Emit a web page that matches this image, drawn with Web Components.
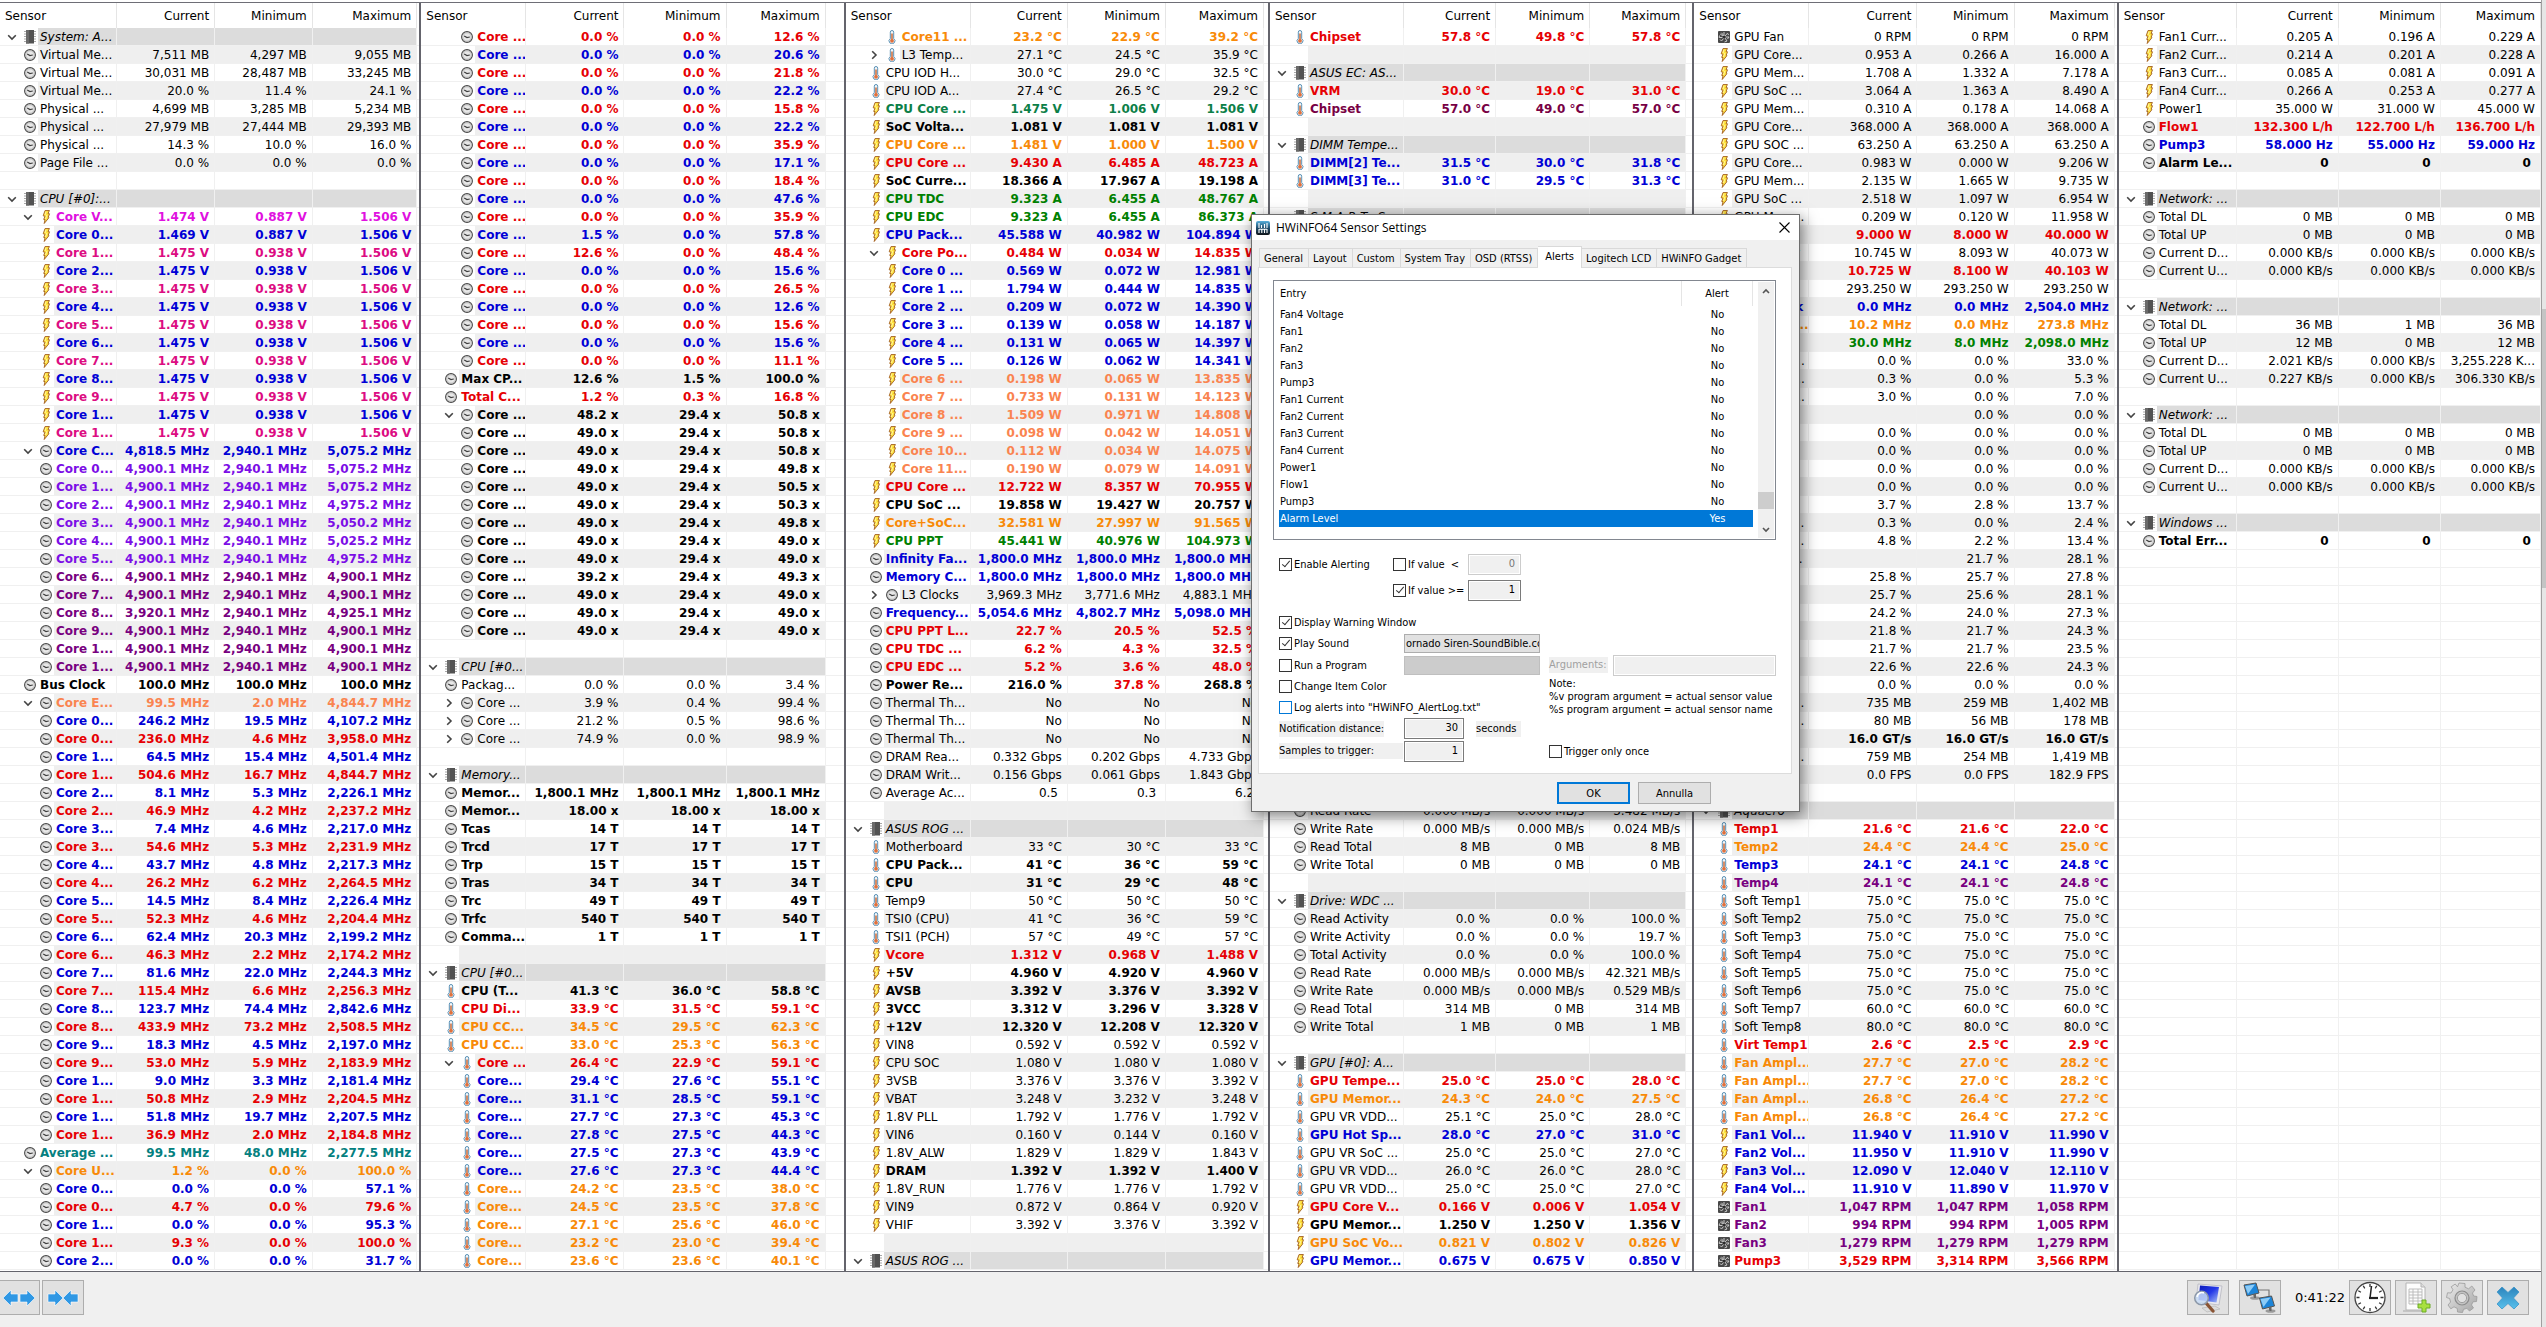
<!DOCTYPE html>
<html lang="en">
<head>
<meta charset="utf-8">
<title>Sensor Status</title>
<style>
html, body { margin: 0; height: 100%; }
body { background: #e4e4e4; font-family: "DejaVu Sans", Verdana, sans-serif; font-size: 12px; color: #000; overflow: hidden; }
</style>
</head>
<body>
<sensor-monitor></sensor-monitor>

<script>
/* Row format: <icon><level><chevron>-<colour>|name|current|minimum|maximum
   icons: c clock, b bolt, t thermometer, f fan; "g|name" is a group, "." an empty row */

/* Rows of one kind that differ only in their values. */
const series = (code, unit, names, values) => values.trim().split(/\s*;\s*/).map((set, i) => {
  const [a, b, c] = set.split(" ");
  const kind = Array.isArray(code) ? code[i % code.length] : code;
  const name = Array.isArray(names) ? names[i] : names;
  return `${kind}|${name}|${a} ${unit}|${b} ${unit}|${c} ${unit}`;
}).join("\n");

const CORES = ["0", "1", "2", "3", "4", "5", "6", "7", "8", "9", "1", "1"].map(n => `Core ${n}...`);
const THREADS = CORES.flatMap(n => [n, n]);

const PANELS = [
{ grow: 421, cols: [117, 99, 98, 105, 2], rows: `
g|System: A...
c1|Virtual Me...|7,511 MB|4,297 MB|9,055 MB
c1|Virtual Me...|30,031 MB|28,487 MB|33,245 MB
c1|Virtual Me...|20.0 %|11.4 %|24.1 %
c1|Physical ...|4,699 MB|3,285 MB|5,234 MB
c1|Physical ...|27,979 MB|27,444 MB|29,393 MB
c1|Physical ...|14.3 %|10.0 %|16.0 %
c1|Page File ...|0.0 %|0.0 %|0.0 %
.
g|CPU [#0]:...
b2v-m|Core V...|1.474 V|0.887 V|1.506 V
b2-b|Core 0...|1.469 V|0.887 V|1.506 V
${series(["b2-p", "b2-b"], "V", CORES.slice(1), Array(11).fill("1.475 0.938 1.506").join(";"))}
c2v-b|Core C...|4,818.5 MHz|2,940.1 MHz|5,075.2 MHz
${series("c2-v", "MHz", CORES, "4,900.1 2,940.1 5,075.2;4,900.1 2,940.1 5,075.2;4,900.1 2,940.1 4,975.2;4,900.1 2,940.1 5,050.2;4,900.1 2,940.1 5,025.2;4,900.1 2,940.1 4,975.2")}
${series("c2-u", "MHz", CORES.slice(6), "4,900.1 2,940.1 4,900.1;4,900.1 2,940.1 4,900.1;3,920.1 2,940.1 4,925.1;4,900.1 2,940.1 4,900.1;4,900.1 2,940.1 4,900.1;4,900.1 2,940.1 4,900.1")}
c1-k|Bus Clock|100.0 MHz|100.0 MHz|100.0 MHz
c2v-c|Core E...|99.5 MHz|2.0 MHz|4,844.7 MHz
${series(["c2-b", "c2-r"], "MHz", THREADS, `246.2 19.5 4,107.2;236.0 4.6 3,958.0;64.5 15.4 4,501.4;504.6 16.7 4,844.7;
8.1 5.3 2,226.1;46.9 4.2 2,237.2;7.4 4.6 2,217.0;54.6 5.3 2,231.9;43.7 4.8 2,217.3;26.2 6.2 2,264.5;
14.5 8.4 2,226.4;52.3 4.6 2,204.4;62.4 20.3 2,199.2;46.3 2.2 2,174.2;81.6 22.0 2,244.3;115.4 6.6 2,256.3;
123.7 74.4 2,842.6;433.9 73.2 2,508.5;18.3 4.5 2,197.0;53.0 5.9 2,183.9;9.0 3.3 2,181.4;50.8 2.9 2,204.5;
51.8 19.7 2,207.5;36.9 2.0 2,184.8`)}
c1-t|Average ...|99.5 MHz|48.0 MHz|2,277.5 MHz
c2v-o|Core U...|1.2 %|0.0 %|100.0 %
${series(["c2-b", "c2-r"], "%", THREADS, "0.0 0.0 57.1;4.7 0.0 79.6;0.0 0.0 95.3;9.3 0.0 100.0;0.0 0.0 31.7")}` },
{ grow: 424, cols: [105, 98, 102, 99, 18], rows: `
${series(["c2-r", "c2-b"], "%", "Core ...", `0.0 0.0 12.6;0.0 0.0 20.6;0.0 0.0 21.8;0.0 0.0 22.2;0.0 0.0 15.8;0.0 0.0 22.2;
0.0 0.0 35.9;0.0 0.0 17.1;0.0 0.0 18.4;0.0 0.0 47.6;0.0 0.0 35.9;1.5 0.0 57.8;12.6 0.0 48.4;0.0 0.0 15.6;
0.0 0.0 26.5;0.0 0.0 12.6;0.0 0.0 15.6;0.0 0.0 15.6;0.0 0.0 11.1`)}
c1-k|Max CP...|12.6 %|1.5 %|100.0 %
c1-r|Total C...|1.2 %|0.3 %|16.8 %
c2v-k|Core ...|48.2 x|29.4 x|50.8 x
${series("c2-k", "x", "Core ...", `49.0 29.4 50.8;49.0 29.4 50.8;49.0 29.4 49.8;49.0 29.4 50.5;49.0 29.4 50.3;49.0 29.4 49.8;
49.0 29.4 49.0;49.0 29.4 49.0;39.2 29.4 49.3;49.0 29.4 49.0;49.0 29.4 49.0;49.0 29.4 49.0`)}
.
g|CPU [#0...
c1|Packag...|0.0 %|0.0 %|3.4 %
c2h|Core ...|3.9 %|0.4 %|99.4 %
c2h|Core ...|21.2 %|0.5 %|98.6 %
c2h|Core ...|74.9 %|0.0 %|98.9 %
.
g|Memory...
c1-k|Memor...|1,800.1 MHz|1,800.1 MHz|1,800.1 MHz
c1-k|Memor...|18.00 x|18.00 x|18.00 x
c1-k|Tcas|14 T|14 T|14 T
c1-k|Trcd|17 T|17 T|17 T
c1-k|Trp|15 T|15 T|15 T
c1-k|Tras|34 T|34 T|34 T
c1-k|Trc|49 T|49 T|49 T
c1-k|Trfc|540 T|540 T|540 T
c1-k|Comma...|1 T|1 T|1 T
.
g|CPU [#0...
t1-k|CPU (T...|41.3 °C|36.0 °C|58.8 °C
t1-r|CPU Di...|33.9 °C|31.5 °C|59.1 °C
t1-o|CPU CC...|34.5 °C|29.5 °C|62.3 °C
t1-o|CPU CC...|33.0 °C|25.3 °C|56.3 °C
t2v-r|Core ...|26.4 °C|22.9 °C|59.1 °C
${series("t2-b", "°C", "Core...", "29.4 27.6 55.1;31.1 28.5 59.1;27.7 27.3 45.3;27.8 27.5 44.3;27.5 27.3 43.9;27.6 27.3 44.4")}
${series("t2-o", "°C", "Core...", "24.2 23.5 38.0;24.5 23.5 37.8;27.1 25.6 46.0;23.2 23.0 39.4;23.6 23.6 40.1")}` },
{ grow: 424, cols: [125, 97, 98, 98, 4], rows: `
t2-o|Core11 ...|23.2 °C|22.9 °C|39.2 °C
t2h|L3 Temp...|27.1 °C|24.5 °C|35.9 °C
t1|CPU IOD H...|30.0 °C|29.0 °C|32.5 °C
t1|CPU IOD A...|27.4 °C|26.5 °C|29.2 °C
b1-s|CPU Core ...|1.475 V|1.006 V|1.506 V
b1-k|SoC Volta...|1.081 V|1.081 V|1.081 V
b1-o|CPU Core ...|1.481 V|1.000 V|1.500 V
b1-r|CPU Core ...|9.430 A|6.485 A|48.723 A
b1-k|SoC Curre...|18.366 A|17.967 A|19.198 A
b1-g|CPU TDC|9.323 A|6.455 A|48.767 A
b1-g|CPU EDC|9.323 A|6.455 A|86.373 A
b1-b|CPU Pack...|45.588 W|40.982 W|104.894 W
b2v-r|Core Po...|0.484 W|0.034 W|14.835 W
b2-b|Core 0 ...|0.569 W|0.072 W|12.981 W
b2-b|Core 1 ...|1.794 W|0.444 W|14.835 W
b2-b|Core 2 ...|0.209 W|0.072 W|14.390 W
b2-b|Core 3 ...|0.139 W|0.058 W|14.187 W
b2-b|Core 4 ...|0.131 W|0.065 W|14.397 W
b2-b|Core 5 ...|0.126 W|0.062 W|14.341 W
b2-c|Core 6 ...|0.198 W|0.065 W|13.835 W
b2-c|Core 7 ...|0.733 W|0.131 W|14.123 W
b2-c|Core 8 ...|1.509 W|0.971 W|14.808 W
b2-c|Core 9 ...|0.098 W|0.042 W|14.051 W
b2-c|Core 10...|0.112 W|0.034 W|14.075 W
b2-c|Core 11...|0.190 W|0.079 W|14.091 W
b1-r|CPU Core ...|12.722 W|8.357 W|70.955 W
b1-k|CPU SoC ...|19.858 W|19.427 W|20.757 W
b1-o|Core+SoC...|32.581 W|27.997 W|91.565 W
b1-g|CPU PPT|45.441 W|40.976 W|104.973 W
c1-b|Infinity Fa...|1,800.0 MHz|1,800.0 MHz|1,800.0 MHz
c1-b|Memory C...|1,800.0 MHz|1,800.0 MHz|1,800.0 MHz
c2h|L3 Clocks|3,969.3 MHz|3,771.6 MHz|4,883.1 MHz
c1-b|Frequency...|5,054.6 MHz|4,802.7 MHz|5,098.0 MHz
c1-r|CPU PPT L...|22.7 %|20.5 %|52.5 %
c1-r|CPU TDC ...|6.2 %|4.3 %|32.5 %
c1-r|CPU EDC ...|5.2 %|3.6 %|48.0 %
c1-k|Power Re...|216.0 %|!37.8 %|268.8 %
c1|Thermal Th...|No|No|No
c1|Thermal Th...|No|No|No
c1|Thermal Th...|No|No|No
c1|DRAM Rea...|0.332 Gbps|0.202 Gbps|4.733 Gbps
c1|DRAM Writ...|0.156 Gbps|0.061 Gbps|1.843 Gbps
c1|Average Ac...|0.5 |0.3 |6.2 
.
g|ASUS ROG ...
t1|Motherboard|33 °C|30 °C|33 °C
t1-k|CPU Pack...|41 °C|36 °C|59 °C
t1-k|CPU|31 °C|29 °C|48 °C
t1|Temp9|50 °C|50 °C|50 °C
t1|TSI0 (CPU)|41 °C|36 °C|59 °C
t1|TSI1 (PCH)|57 °C|49 °C|57 °C
b1-r|Vcore|1.312 V|0.968 V|1.488 V
b1-k|+5V|4.960 V|4.920 V|4.960 V
b1-k|AVSB|3.392 V|3.376 V|3.392 V
b1-k|3VCC|3.312 V|3.296 V|3.328 V
b1-k|+12V|12.320 V|12.208 V|12.320 V
b1|VIN8|0.592 V|0.592 V|0.592 V
b1|CPU SOC|1.080 V|1.080 V|1.080 V
b1|3VSB|3.376 V|3.376 V|3.392 V
b1|VBAT|3.248 V|3.232 V|3.248 V
b1|1.8V PLL|1.792 V|1.776 V|1.792 V
b1|VIN6|0.160 V|0.144 V|0.160 V
b1|1.8V_ALW|1.829 V|1.829 V|1.843 V
b1-k|DRAM|1.392 V|1.392 V|1.400 V
b1|1.8V_RUN|1.776 V|1.776 V|1.792 V
b1|VIN9|0.872 V|0.864 V|0.920 V
b1|VHIF|3.392 V|3.376 V|3.392 V
.
g|ASUS ROG ...` },
{ grow: 424, cols: [134, 92, 94, 96, 6], rows: `
t1-r|Chipset|57.8 °C|49.8 °C|57.8 °C
.
g|ASUS EC: AS...
t1-r|VRM|30.0 °C|19.0 °C|31.0 °C
t1-w|Chipset|57.0 °C|49.0 °C|57.0 °C
.
g|DIMM Tempe...
t1-b|DIMM[2] Te...|31.5 °C|30.0 °C|31.8 °C
t1-b|DIMM[3] Te...|31.0 °C|29.5 °C|31.3 °C
.
g|S.M.A.R.T.: S...
${".\n".repeat(32)}c1|Read Rate|0.000 MB/s|0.000 MB/s|3.482 MB/s
c1|Write Rate|0.000 MB/s|0.000 MB/s|0.024 MB/s
c1|Read Total|8 MB|0 MB|8 MB
c1|Write Total|0 MB|0 MB|0 MB
.
g|Drive: WDC ...
c1|Read Activity|0.0 %|0.0 %|100.0 %
c1|Write Activity|0.0 %|0.0 %|19.7 %
c1|Total Activity|0.0 %|0.0 %|100.0 %
c1|Read Rate|0.000 MB/s|0.000 MB/s|42.321 MB/s
c1|Write Rate|0.000 MB/s|0.000 MB/s|0.529 MB/s
c1|Read Total|314 MB|0 MB|314 MB
c1|Write Total|1 MB|0 MB|1 MB
.
g|GPU [#0]: A...
t1-r|GPU Tempe...|25.0 °C|25.0 °C|28.0 °C
t1-o|GPU Memor...|24.3 °C|24.0 °C|27.5 °C
t1|GPU VR VDD...|25.1 °C|25.0 °C|28.0 °C
t1-b|GPU Hot Sp...|28.0 °C|27.0 °C|31.0 °C
t1|GPU VR SoC ...|25.0 °C|25.0 °C|27.0 °C
t1|GPU VR VDD...|26.0 °C|26.0 °C|28.0 °C
t1|GPU VR VDD...|25.0 °C|25.0 °C|27.0 °C
b1-r|GPU Core V...|0.166 V|0.006 V|1.054 V
b1-k|GPU Memor...|1.250 V|1.250 V|1.356 V
b1-o|GPU SoC Vo...|0.821 V|0.802 V|0.826 V
b1-b|GPU Memor...|0.675 V|0.675 V|0.850 V` },
{ grow: 424, cols: [115, 108, 97, 100, 2], rows: `
f1|GPU Fan|0 RPM|0 RPM|0 RPM
b1|GPU Core...|0.953 A|0.266 A|16.000 A
b1|GPU Mem...|1.708 A|1.332 A|7.178 A
b1|GPU SoC ...|3.064 A|1.363 A|8.490 A
b1|GPU Mem...|0.310 A|0.178 A|14.068 A
b1|GPU Core...|368.000 A|368.000 A|368.000 A
b1|GPU SOC ...|63.250 A|63.250 A|63.250 A
b1|GPU Core...|0.983 W|0.000 W|9.206 W
b1|GPU Mem...|2.135 W|1.665 W|9.735 W
b1|GPU SoC ...|2.518 W|1.097 W|6.954 W
b1|GPU Mem...|0.209 W|0.120 W|11.958 W
b1-r|GPU AS...|9.000 W|8.000 W|40.000 W
b1|GPU Power|10.745 W|8.093 W|40.073 W
b1-r|GPU PPT|10.725 W|8.100 W|40.103 W
b1|GPU PPT ...|293.250 W|293.250 W|293.250 W
c1-b|GPU Clock|0.0 MHz|0.0 MHz|2,504.0 MHz
c1-o|GPU Mem...|10.2 MHz|0.0 MHz|273.8 MHz
c1-g|GPU SoC|30.0 MHz|8.0 MHz|2,098.0 MHz
c1|GPU Utiliz...|0.0 %|0.0 %|33.0 %
c1|GPU D3D ...|0.3 %|0.0 %|5.3 %
c1|GPU D3D ...|3.0 %|0.0 %|7.0 %
c2|GPU D...||0.0 %|0.0 %
c2|GPU D...|0.0 %|0.0 %|0.0 %
c2|GPU D...|0.0 %|0.0 %|0.0 %
c2|GPU D...|0.0 %|0.0 %|0.0 %
c2|GPU D...|0.0 %|0.0 %|0.0 %
c2|GPU C...|3.7 %|2.8 %|13.7 %
c1|GPU Mem...|0.3 %|0.0 %|2.4 %
c1|GPU Mem...|4.8 %|2.2 %|13.4 %
c1|GPU Core...||21.7 %|28.1 %
c1|GPU Fan ...|25.8 %|25.7 %|27.8 %
c1|GPU Fan ...|25.7 %|25.6 %|28.1 %
c1|GPU Fan ...|24.2 %|24.0 %|27.3 %
c1|GPU PPT|21.8 %|21.7 %|24.3 %
c1|GPU TDC|21.7 %|21.7 %|23.5 %
c1|GPU TDC|22.6 %|22.6 %|24.3 %
c1|GPU PPT ...|0.0 %|0.0 %|0.0 %
c1|GPU Mem...|735 MB|259 MB|1,402 MB
c1|GPU Mem...|80 MB|56 MB|178 MB
c1-k|PCIe Li...|16.0 GT/s|16.0 GT/s|16.0 GT/s
c1|GPU Mem...|759 MB|254 MB|1,419 MB
c1|Framerate|0.0 FPS|0.0 FPS|182.9 FPS
.
g|Aquaero
t1-r|Temp1|21.6 °C|21.6 °C|22.0 °C
t1-o|Temp2|24.4 °C|24.4 °C|25.0 °C
t1-b|Temp3|24.1 °C|24.1 °C|24.8 °C
t1-u|Temp4|24.1 °C|24.1 °C|24.8 °C
t1|Soft Temp1|75.0 °C|75.0 °C|75.0 °C
t1|Soft Temp2|75.0 °C|75.0 °C|75.0 °C
t1|Soft Temp3|75.0 °C|75.0 °C|75.0 °C
t1|Soft Temp4|75.0 °C|75.0 °C|75.0 °C
t1|Soft Temp5|75.0 °C|75.0 °C|75.0 °C
t1|Soft Temp6|75.0 °C|75.0 °C|75.0 °C
t1|Soft Temp7|60.0 °C|60.0 °C|60.0 °C
t1|Soft Temp8|80.0 °C|80.0 °C|80.0 °C
t1-r|Virt Temp1|2.6 °C|2.5 °C|2.9 °C
t1-o|Fan Ampl...|27.7 °C|27.0 °C|28.2 °C
t1-o|Fan Ampl...|27.7 °C|27.0 °C|28.2 °C
t1-o|Fan Ampl...|26.8 °C|26.4 °C|27.2 °C
t1-o|Fan Ampl...|26.8 °C|26.4 °C|27.2 °C
b1-b|Fan1 Vol...|11.940 V|11.910 V|11.990 V
b1-b|Fan2 Vol...|11.950 V|11.910 V|11.990 V
b1-b|Fan3 Vol...|12.090 V|12.040 V|12.110 V
b1-b|Fan4 Vol...|11.910 V|11.890 V|11.970 V
f1-u|Fan1|1,047 RPM|1,047 RPM|1,058 RPM
f1-u|Fan2|994 RPM|994 RPM|1,005 RPM
f1-u|Fan3|1,279 RPM|1,279 RPM|1,279 RPM
f1-r|Pump3|3,529 RPM|3,314 RPM|3,566 RPM` },
{ grow: 424, cols: [118, 102, 102, 100, 0], rows: `
b1|Fan1 Curr...|0.205 A|0.196 A|0.229 A
b1|Fan2 Curr...|0.214 A|0.201 A|0.228 A
b1|Fan3 Curr...|0.085 A|0.081 A|0.091 A
b1|Fan4 Curr...|0.266 A|0.253 A|0.277 A
b1|Power1|35.000 W|31.000 W|45.000 W
c1-r|Flow1|132.300 L/h|122.700 L/h|136.700 L/h
c1-b|Pump3|58.000 Hz|55.000 Hz|59.000 Hz
c1-k|Alarm Le...|0 |0 |0 
.
g|Network: ...
c1|Total DL|0 MB|0 MB|0 MB
c1|Total UP|0 MB|0 MB|0 MB
c1|Current D...|0.000 KB/s|0.000 KB/s|0.000 KB/s
c1|Current U...|0.000 KB/s|0.000 KB/s|0.000 KB/s
.
g|Network: ...
c1|Total DL|36 MB|1 MB|36 MB
c1|Total UP|12 MB|0 MB|12 MB
c1|Current D...|2.021 KB/s|0.000 KB/s|3,255.228 K...
c1|Current U...|0.227 KB/s|0.000 KB/s|306.330 KB/s
.
g|Network: ...
c1|Total DL|0 MB|0 MB|0 MB
c1|Total UP|0 MB|0 MB|0 MB
c1|Current D...|0.000 KB/s|0.000 KB/s|0.000 KB/s
c1|Current U...|0.000 KB/s|0.000 KB/s|0.000 KB/s
.
g|Windows ...
c1-k|Total Err...|0 |0 |0 ` }
];
const VISIBLE_ROWS = 69;

const ICONS = {
  c: `<svg class="ic" viewBox="0 0 12 14"><circle cx="6" cy="7" r="5.400" fill="#e8e8e8" stroke="#484848" stroke-width="1.100"/><circle cx="6" cy="7" r="4.200" fill="none" stroke="#b4b4b4" stroke-width=".8"/><path d="M3.200 6 6 7.600 8.800 7" fill="none" stroke="#3c3c3c" stroke-width="1.100"/></svg>`,
  b: `<svg class="ic" viewBox="0 0 12 14"><path d="M5 .6 9.4.5 8 3.6 9.5 3.8 8.2 7.2 9 7.6 4.2 13.5 5 9.6 3.7 9.4 5 6.2 3.2 5.8Z" fill="#ffe23c" stroke="#a05c20" stroke-width=".9"/><path d="M6 1.5 5 5M6.8 5 5.6 9" stroke="#fff9b8" stroke-width=".8"/></svg>`,
  t: `<svg class="ic" viewBox="0 0 12 14"><path d="M4.300 2.200a1.700 1.700 0 0 1 3.400 0V8.600a2.900 2.900 0 1 1-3.400 0Z" fill="#f2f8fc" stroke="#5a90b4"/><path d="M6 3.400V10" stroke="#c8602c" stroke-width="1.400"/><circle cx="6" cy="10.800" r="1.900" fill="#e0703c"/></svg>`,
  f: `<svg class="ic" viewBox="0 0 12 14"><rect y="1" width="12" height="12" rx="1" fill="#484848"/><path d="M6 2V6L3.500 2.800M7 6 9.500 3.200 10.600 5M7.500 7H11L9.500 9M7 8 9 11 6.500 12M5.500 8.500 3.500 11 2 9.500M4.500 7.500 1.200 7.500 1.500 5.500M5 6 2.200 4" fill="none" stroke="#c8c8c8"/><circle cx="6" cy="7" r="1.300" fill="#2c2c2c"/></svg>`,
  g: `<svg class="ic" viewBox="0 0 12 14"><path d="M0 1.500H12M0 4H12M0 6.500H12M0 9H12M0 11.500H12" stroke="#a8a8a8" stroke-width="1.200"/><rect x="2" y="0" width="8" height="13.500" fill="#525252"/><rect x="2" y="0" width="3" height="13.500" fill="#6a6a6a"/></svg>`,
  v: `<svg class="ch" viewBox="0 0 12 12"><path d="M2.200 4.200 6 8 9.800 4.200" fill="none" stroke="#444" stroke-width="1.600"/></svg>`,
  h: `<svg class="ch" viewBox="0 0 12 12"><path d="M4.200 2.200 8 6 4.200 9.800" fill="none" stroke="#444" stroke-width="1.600"/></svg>`
};

class SensorPanel extends HTMLElement {
  constructor() { super(); this.attachShadow({ mode: "open" }); }
  connectedCallback() {
    const panel = PANELS[+this.getAttribute("index")];
    const total = panel.cols.reduce((a, b) => a + b, 0);
    const lines = panel.rows.replace(/^\n/, "").split("\n");
    let body = "";
    for (let i = 0; i < VISIBLE_ROWS; i++) {
      const line = lines[i];
      if (line === undefined) {
        body += `<tr><td></td><td></td><td></td><td></td><td class="rest"></td></tr>`;
        continue;
      }
      const odd = i % 2 ? "odd" : "";
      const [code, name = "", a = "", b = "", c = ""] = line.split("|");
      const group = code === "g";
      const level = code[1] === "2" ? 2 : 1;
      const colour = (code.split("-")[1] || "");
      const chevron = group ? ICONS.v : (code[2] && code[2] !== "-" ? ICONS[code[2]] : "");
      const icon = code === "." ? "" : ICONS[code[0]];
      const cell = v => v[0] === "!" ? `<td class="r">${v.slice(1)}</td>` : `<td>${v}</td>`;
      body += `<tr class="${group ? "group" : odd} ${colour}"><td class="name"><div class="nm"><span class="gut l${level}">${chevron}${icon}</span><span class="lb">${name}</span></div></td>${cell(a)}${cell(b)}${cell(c)}<td class="rest"></td></tr>`;
    }
    this.shadowRoot.innerHTML = `
<style>
:host { display: block; min-width: 0; background: #fff; overflow: hidden; }
table { width: 100%; table-layout: fixed; border-collapse: separate; border-spacing: 0; }
th { height: 25px; padding: 0 5px 0 0; box-sizing: border-box; font-weight: 400; text-align: right; border-right: 1px solid #e5e5e5; }
th:first-child { text-align: left; padding-left: 5px; }
td { height: 15px; line-height: 15px; padding: 2px 5px 0 0; text-align: right; white-space: pre; border-right: 1px solid #f0f0f0; border-bottom: 1px solid #f0f0f0; overflow: hidden; }
td.name { height: 17px; padding: 0; text-align: left; }
td.rest, th.rest { border-right: 0; padding: 0; }
.nm { display: flex; height: 17px; line-height: 19px; overflow: hidden; }
.gut { flex: none; display: flex; justify-content: flex-end; align-items: center; gap: 6px; padding-right: 2px; box-sizing: border-box; }
.l1 { width: 38px; } .l2 { width: 54px; }
.lb { flex: 1; padding-left: 2px; }
.ic { width: 12px; height: 14px; } .ch { width: 12px; height: 12px; }
.odd td:not(.name):not(.rest), .odd .lb { background: #efefef; }
.group td:not(.name):not(.rest), .group .lb { background: #dcdcdc; }
.group .lb { font-style: italic; }
.k, .b, .r, .p, .m, .v, .u, .c, .o, .t, .s, .g, .w { font-weight: 700; }
.b { color: #0000d6; } .r { color: #e60004; } .p { color: #dc0c82; } .m { color: #e010e0; }
.v { color: #7c0ee6; } .u { color: #780080; } .c { color: #fa8450; } .o { color: #f88a08; }
.t { color: #048080; } .s { color: #0c8048; } .g { color: #008000; } .w { color: #780044; }
</style>
<table>
<colgroup>${panel.cols.map(w => `<col style="width:${(w / total * 100).toFixed(3)}%">`).join("")}</colgroup>
<thead><tr><th>Sensor</th><th>Current</th><th>Minimum</th><th>Maximum</th><th class="rest"></th></tr></thead>
<tbody>${body}</tbody></table>`;
  }
}
customElements.define("sensor-panel", SensorPanel);

class ToolButton extends HTMLElement {
  constructor() {
    super();
    this.attachShadow({ mode: "open" }).innerHTML = `
<style>
:host { display: block; }
button { display: flex; align-items: center; justify-content: center; width: 42px; height: 35px; padding: 0; background: #e1e1e1; border: 1px solid #adadad; }
</style><button type="button"><slot></slot></button>`;
  }
  connectedCallback() { this.shadowRoot.querySelector("button").setAttribute("aria-label", this.getAttribute("label")); }
}
customElements.define("tool-button", ToolButton);

class StatusToolbar extends HTMLElement {
  constructor() {
    super();
    const pc = `<path d="M1 4 13 2 16 12 4 15Z" fill="#1c84d8" stroke="#555" stroke-width="1"/><path d="M2 5 12 3.500 5 13Z" fill="#8cccf8"/><ellipse cx="12" cy="17" rx="5" ry="1.800" fill="#9a9a9a"/><path d="M10 13 13 12.500V17H11Z" fill="#666"/>`;
    this.attachShadow({ mode: "open" }).innerHTML = `
<style>
:host { display: flex; align-items: flex-start; height: 55px; box-sizing: border-box; padding: 8px 12px 0 0; background: #f0f0f0; }
.left { display: flex; gap: 2px; margin-left: -2px; }
.right { display: flex; align-items: center; margin-left: auto; gap: 4px; }
.pair { display: flex; gap: 10px; margin-right: 10px; }
time { font-size: 13px; }
svg { display: block; width: 34px; height: 33px; }
</style>
<div class="left">
<tool-button label="Expand columns"><svg viewBox="0 0 34 33"><path d="M1 17 9 9V13H16V21H9V25ZM33 17 25 9V13H18V21H25V25Z" fill="#3098e4" stroke="#fff" stroke-width=".6"/></svg></tool-button>
<tool-button label="Shrink columns"><svg viewBox="0 0 34 33"><path d="M17 17 9 9V13H2V21H9V25ZM17 17 25 9V13H32V21H25V25Z" fill="#3098e4" stroke="#fff" stroke-width=".6"/></svg></tool-button>
</div>
<div class="right">
<div class="pair">
<tool-button label="Sensor details"><svg viewBox="0 0 34 33">
<defs><linearGradient id="scr" x1="0" y1="0" x2="1" y2="1"><stop offset="0" stop-color="#0c1cb8"/><stop offset=".5" stop-color="#2438e8"/><stop offset="1" stop-color="#a8c0f4"/></linearGradient></defs>
<path d="M7 3 31 5 28 24 5 21Z" fill="#e8e8ee" stroke="#b8b8c0" stroke-width=".8"/><path d="M9 4.500 28 6 25.500 21.500 7.500 19Z" fill="url(#scr)"/><path d="M11 27 24 25 29 28 16 31Z" fill="#dcdcdc" stroke="#b0b0b0" stroke-width=".6"/>
<path d="M15 22 22 30" stroke="#8a5434" stroke-width="3.400" stroke-linecap="round"/><circle cx="10.500" cy="17" r="6.800" fill="#c8dcf4" fill-opacity=".85" stroke="#8c98a8" stroke-width="1.500"/><path d="M6 16a5 5 0 0 1 7-4" stroke="#fff" stroke-width="1.500" fill="none"/></svg></tool-button>
<tool-button label="Network"><svg viewBox="0 0 34 33"><path d="M15 9H26V17" fill="none" stroke="#777" stroke-width="1.200"/>${pc}<g transform="translate(15.500 13)">${pc}</g></svg></tool-button>
</div>
<time>0:41:22</time>
<tool-button label="Reset clock"><svg viewBox="0 0 34 33"><circle cx="17" cy="16.500" r="15" fill="#fff" stroke="#444" stroke-width="1.300"/>
<g stroke="#333" stroke-width="1.300"><path d="M17 3V6M17 27V30M3.500 16.500H6.500M27.500 16.500H30.500M10.250 4.800 11.750 7.400M22.250 25.600 23.750 28.200M5.300 9.750 7.900 11.250M26.100 21.750 28.700 23.250M23.750 4.800 22.250 7.400M11.750 25.600 10.250 28.200M28.700 9.750 26.100 11.250M7.900 21.750 5.300 23.250"/></g>
<path d="M17 17 18.500 5" stroke="#222" stroke-width="1.500"/><path d="M16 17H25" stroke="#222" stroke-width="2.200"/></svg></tool-button>
<tool-button label="Start logging"><svg viewBox="0 0 34 33"><path d="M7 2H22L26 6V29H7Z" fill="#fcfcfc" stroke="#b4b4b4"/><path d="M22 2V6H26" fill="#ddd" stroke="#b4b4b4"/><path d="M10 8H23M10 11H23M10 14H23M10 17H23M10 20H23M10 23H19M10 8V23M14 8V23M19 8V23M23 8V20" stroke="#b8b8b8" stroke-width=".9"/><path d="M4 30H27" stroke="#bbb" stroke-width="1.500"/>
<path d="M23 19H27V23H31V27H27V31H23V27H19V23H23Z" fill="#a8e040" stroke="#6cac28"/></svg></tool-button>
<tool-button label="Settings"><svg viewBox="0 0 34 33"><defs><linearGradient id="gr" x1="0" y1="0" x2="1" y2="1"><stop offset="0" stop-color="#ececec"/><stop offset="1" stop-color="#a4a4a4"/></linearGradient></defs>
<path d="M14 2 20 2.500 20 6.200 23.600 7.800 26.800 5 30 9 27.500 12 28.600 15 32 15.500 31.500 20.500 28 20.800 26.500 24 28.500 27 24.500 30 21.800 27.300 18.500 28.400 17.500 31.500 12.500 31 12.300 27.500 9 25.800 5.800 27.800 3 24 5.600 21 4.600 17.500 1.500 16.500 2.500 11.800 6 12 8 8.800 6.200 5.800 10.200 3 12.500 5.800Z" fill="url(#gr)" stroke="#9a9a9a" stroke-width=".8"/>
<circle cx="17" cy="17" r="7" fill="#c4c4c4" stroke="#8c8c8c" stroke-width="1.200"/><circle cx="17" cy="17" r="4.600" fill="#e1e1e1" stroke="#a0a0a0"/></svg></tool-button>
<tool-button label="Close"><svg viewBox="0 0 34 33"><defs><linearGradient id="xg" x1="0" y1="0" x2="0" y2="1"><stop offset="0" stop-color="#2c84bc"/><stop offset="1" stop-color="#58c0ec"/></linearGradient></defs><path d="M11 6 17 11.500 23 6 28 11 22.500 17 28 23 23 28 17 22.500 11 28 6 23 11.500 17 6 11Z" fill="url(#xg)" stroke="#3c94c8" stroke-width=".8"/></svg></tool-button>
</div>`;
  }
}
customElements.define("status-toolbar", StatusToolbar);

class CheckOption extends HTMLElement {
  constructor() {
    super();
    this.attachShadow({ mode: "open" }).innerHTML = `
<style>
:host { display: block; }
label { display: flex; align-items: center; gap: 2px; white-space: pre; }
input { appearance: none; flex: none; position: relative; width: 13px; height: 13px; margin: 0; border: 1px solid #333; background: #fff; }
:host([focused]) input { border-color: #0078d7; }
input:checked::after { content: ""; position: absolute; left: 4px; top: 0; width: 3px; height: 7px; border: solid #333; border-width: 0 1px 1px 0; transform: rotate(40deg); }
</style><label><input type="checkbox"><slot></slot></label>`;
  }
  connectedCallback() { this.shadowRoot.querySelector("input").checked = this.hasAttribute("checked"); }
}
customElements.define("check-option", CheckOption);

class AlertList extends HTMLElement {
  constructor() {
    super();
    const names = ["Fan4 Voltage", "Fan1", "Fan2", "Fan3", "Pump3", "Fan1 Current", "Fan2 Current", "Fan3 Current", "Fan4 Current", "Power1", "Flow1", "Pump3"];
    this.attachShadow({ mode: "open" }).innerHTML = `
<style>
:host { display: flex; height: 258px; border: 1px solid #828790; background: #fff; padding: 0 1px 0 5px; }
table { flex: 1; align-self: flex-start; table-layout: fixed; border-collapse: separate; border-spacing: 0; }
th { height: 25px; padding: 0 0 0 1px; font-weight: 400; border-right: 1px solid #e5e5e5; text-align: left; }
td { height: 17px; line-height: 17px; padding: 0 0 0 1px; }
th + th, td + td { width: 70px; text-align: center; padding: 0; }
.sel td { background: #0078d7; color: #fff; }
.bar { width: 16px; margin: 1px 0 1px 5px; background: #f0f0f0; display: flex; flex-direction: column; align-items: center; }
.bar svg { width: 12px; height: 18px; }
.space { flex: 1; } .thumb { width: 16px; height: 17px; background: #cdcdcd; margin-bottom: 11px; }
</style>
<table><thead><tr><th>Entry</th><th>Alert</th></tr></thead><tbody>
${names.map(n => `<tr><td>${n}</td><td>No</td></tr>`).join("")}
<tr class="sel"><td>Alarm Level</td><td>Yes</td></tr></tbody></table>
<div class="bar"><svg viewBox="0 0 12 18"><path d="M3 11 6 8 9 11" fill="none" stroke="#555" stroke-width="1.600"/></svg><div class="space"></div><div class="thumb"></div><svg viewBox="0 0 12 18"><path d="M3 8 6 11 9 8" fill="none" stroke="#555" stroke-width="1.600"/></svg></div>`;
  }
}
customElements.define("alert-list", AlertList);

class SettingsDialog extends HTMLElement {
  constructor() {
    super();
    this.attachShadow({ mode: "open" }).innerHTML = `
<style>
:host { display: flex; flex-direction: column; width: 549px; box-sizing: border-box; background: #f0f0f0; border: 1px solid #6e6e6e; box-shadow: 3px 4px 14px rgba(0,0,0,.5); font-family: "DejaVu Sans Condensed", Tahoma, sans-serif; font-size: 11px; line-height: 13px; }
header { display: flex; align-items: center; height: 25px; background: #fff; padding: 0 9px 0 4px; gap: 6px; font-family: "Open Sans", "Noto Sans", sans-serif; font-size: 12px; line-height: 16px; }
header svg { width: 14px; height: 14px; }
header button { margin-left: auto; width: 11px; height: 11px; padding: 0; border: 0; background: none; display: flex; }
header button svg { width: 11px; height: 11px; }
.tabs { display: flex; align-items: flex-end; height: 21px; padding: 6px 0 0 7px; }
.tabs button { font: inherit; height: 19px; padding: 1px 5px 0 4px; border: 1px solid #d9d9d9; border-left-width: 0; border-bottom: 0; background: #f0f0f0; white-space: nowrap; color: #000; }
.tabs button:first-child { border-left-width: 1px; }
.tabs button.on { height: 22px; padding: 0 7px 2px; background: #fff; position: relative; margin-bottom: -1px; }
.pane { margin: 0 7px 8px 6px; background: #fff; border: 1px solid #dcdcdc; padding: 12px 15px 11px 14px; }
.values { display: grid; grid-template-columns: 114px 75px 53px; grid-template-rows: 21px 21px; row-gap: 5px; align-items: center; padding: 14px 0 11px 6px; }
.values .second { grid-column: 2; }
input { box-sizing: border-box; width: 100%; height: 21px; font: inherit; text-align: right; padding: 0 5px 2px; border: 1px solid #7a7a7a; background: #f0f0f0; color: #000; border-radius: 0; box-shadow: inset 0 0 0 1px #fff; }
input:disabled { border-color: #ccc; color: #777; }
.opts { display: grid; grid-template-columns: 125px 60px 76px 9px 64px 1fr; grid-template-rows: 20px 22px 22px 21px 20px 23px 22px; align-items: center; padding: 0 0 0 6px; }
.wide { grid-column: 2 / 4; }
.file { font: inherit; display: flex; align-items: center; height: 19px; padding: 0 0 0 1px; overflow: hidden; white-space: nowrap; background: #e1e1e1; border: 1px solid #adadad; color: #000; }
.file:disabled { background: #ccc; border-color: #bfbfbf; }
.c1 { grid-column: 1; } .full { grid-column: 1 / 4; }
.flat { background: #f0f0f0; height: 16px; line-height: 15px; white-space: nowrap; }
.notif { margin-right: 20px; } .samples { margin-right: 1px; } .unit { margin: 0 19px 0 12px; }
.args { grid-column: 5; color: #a0a0a0; margin-right: 5px; }
.note { grid-column: 5 / 7; grid-row: 4 / 6; margin: 0; white-space: nowrap; }
.once { grid-column: 5 / 7; }
footer { display: flex; justify-content: flex-end; gap: 8px; padding: 0 88px 7px 0; }
footer button { font: inherit; width: 73px; height: 22px; padding: 0; background: #e1e1e1; border: 1px solid #adadad; color: #000; }
footer .ok { border: 2px solid #0078d7; }
</style>
<header><svg viewBox="0 0 14 14"><defs><linearGradient id="lg" x1="0" y1="0" x2="0" y2="1"><stop offset="0" stop-color="#58b0dc"/><stop offset=".5" stop-color="#1c4c6c"/><stop offset="1" stop-color="#101418"/></linearGradient></defs><rect width="14" height="14" rx="2" fill="url(#lg)"/><path d="M3 2V7M5.500 4V7M8.500 3V7M11 2V7M3 8V12M5.800 8V12M8.500 8V12M11 8V12M3 8.300H11" stroke="#fff" stroke-width="1.100"/></svg>
<span>HWiNFO64 Sensor Settings</span>
<button type="button" aria-label="Close"><svg viewBox="0 0 11 11"><path d="M.5.5 10.500 10.500M10.500.5.5 10.500" stroke="#000" stroke-width="1.100"/></svg></button></header>
<div class="tabs" role="tablist"><button role="tab">General</button><button role="tab">Layout</button><button role="tab">Custom</button><button role="tab">System Tray</button><button role="tab">OSD (RTSS)</button><button role="tab" class="on" aria-selected="true">Alerts</button><button role="tab">Logitech LCD</button><button role="tab">HWiNFO Gadget</button></div>
<div class="pane">
<alert-list></alert-list>
<div class="values">
<check-option checked>Enable Alerting</check-option><check-option>If value  &lt;</check-option><input aria-label="Lower limit" value="0" disabled>
<check-option class="second" checked>If value &gt;=</check-option><input aria-label="Upper limit" value="1">
</div>
<div class="opts">
<check-option class="full" checked>Display Warning Window</check-option>
<check-option class="c1" checked>Play Sound</check-option><button type="button" class="file wide">ornado Siren-SoundBible.co</button>
<check-option class="c1">Run a Program</check-option><button type="button" class="file wide" disabled aria-label="Program"></button><label class="flat args" for="args">Arguments:</label><input id="args" disabled>
<check-option class="full">Change Item Color</check-option>
<p class="note">Note:<br>%v program argument = actual sensor value<br>%s program argument = actual sensor name</p>
<check-option class="full" focused>Log alerts into "HWiNFO_AlertLog.txt"</check-option>
<label class="c1 flat notif" for="dist">Notification distance:</label><input id="dist" value="30"><span class="flat unit">seconds</span>
<label class="c1 flat samples" for="samp">Samples to trigger:</label><input id="samp" value="1"><check-option class="once">Trigger only once</check-option>
</div>
</div>
<footer><button type="button" class="ok">OK</button><button type="button">Annulla</button></footer>`;
  }
}
customElements.define("settings-dialog", SettingsDialog);

class SensorMonitor extends HTMLElement {
  constructor() {
    super();
    this.attachShadow({ mode: "open" }).innerHTML = `
<style>
:host { display: flex; height: 100vh; }
.win { flex: 1; min-width: 0; display: flex; flex-direction: column; background: #fff; border-right: 1px solid #a0a0a0; }
.panels { flex: 1; min-height: 0; display: flex; overflow: hidden; margin-top: 2px; border-top: 1px solid #6e6e76; border-bottom: 1px solid #64646c; }
sensor-panel { flex-basis: 0; box-sizing: border-box; }
sensor-panel + sensor-panel { border-left: 2px solid #64646c; }
.behind { flex: none; width: 4px; display: flex; flex-direction: column; background: #e6e6e6; }
.behind i { margin-top: 309px; height: 279px; background: #c4c4c4; }
settings-dialog { position: absolute; left: 1251px; top: 214px; }
</style>
<div class="win"><div class="panels">${PANELS.map((p, i) => `<sensor-panel index="${i}" style="flex-grow:${p.grow}"></sensor-panel>`).join("")}</div><status-toolbar></status-toolbar></div>
<div class="behind"><i></i></div>
<settings-dialog></settings-dialog>`;
  }
}
customElements.define("sensor-monitor", SensorMonitor);
</script>
</body>
</html>
